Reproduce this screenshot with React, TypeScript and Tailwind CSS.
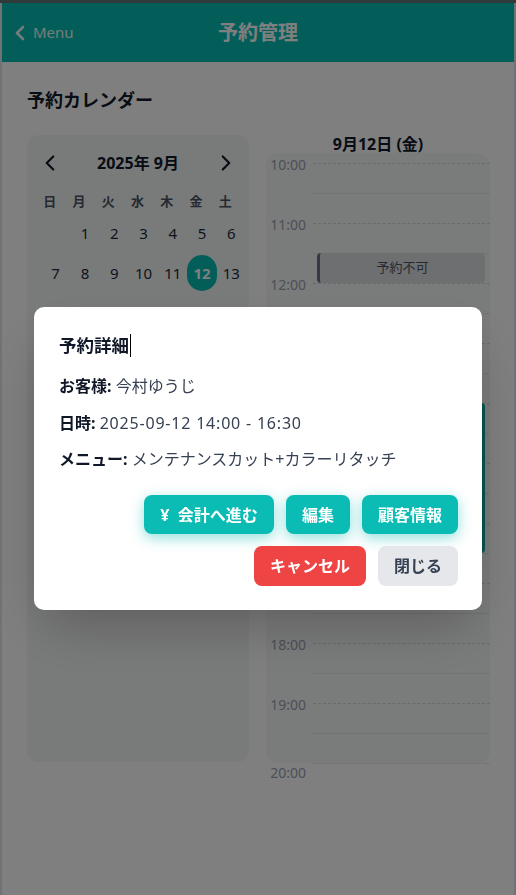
import { ChevronLeft, ChevronRight } from 'lucide-react'

const WEEKDAYS = ['日', '月', '火', '水', '木', '金', '土']
const HOURS = [10, 11, 12, 13, 14, 15, 16, 17, 18, 19]
const SELECTED = 12

// September 2025 starts on Monday
const CELLS: (number | null)[] = [null, ...Array.from({ length: 30 }, (_, i) => i + 1)]

function HourRow({ hour }: { hour: number }) {
  return (
    <div className="flex h-[60px]">
      <div className="w-[40px] shrink-0 -mt-[7px] text-right text-[14px] leading-[18px] text-gray-400">{hour}:00</div>
      <div className="ml-[7px] flex-1 flex flex-col">
        <div className="h-[30px] border-t border-dashed border-gray-300" />
        <div className="h-[30px] border-t border-dotted border-gray-300" />
      </div>
    </div>
  )
}

export default function App() {
  return (
    <div className="min-h-screen bg-[#dae9e6] font-['Noto_Sans','Noto_Sans_CJK_JP',sans-serif]">
      <div className="h-[3px] bg-[#5f7573]" />
      <div className="mx-[2px] bg-white min-h-[892px]">
        {/* Header */}
        <header className="h-[59px] bg-[#07bdb5] grid grid-cols-[1fr_auto_1fr] items-center">
          <div className="flex items-center pl-[6px] text-white/90">
            <ChevronLeft size={24} strokeWidth={2.6} />
            <span className="ml-[1px] text-[15px]">Menu</span>
          </div>
          <h1 className="text-[20px] font-bold text-white">予約管理</h1>
          <div />
        </header>

        <main className="pl-[25px] pr-[24px] pt-[26px]">
          <h2 className="text-[18px] leading-6 font-bold text-gray-900 mb-[23px]">予約カレンダー</h2>

          <div className="grid grid-cols-[222px_1fr] gap-[17px] items-start">
            {/* Calendar */}
            <div className="h-[627px] rounded-xl bg-[#f3f5f4] pt-[12px]">
              <div className="flex h-8 items-center justify-between px-[10px] text-gray-900">
                <ChevronLeft size={26} strokeWidth={2} />
                <span className="text-[16px] font-bold">2025年 9月</span>
                <ChevronRight size={26} strokeWidth={2} />
              </div>
              <div className="mt-[12px] ml-[8px] grid w-[205px] grid-cols-7">
                {WEEKDAYS.map((d) => (
                  <div key={d} className="h-5 text-center text-[13px] leading-5 font-semibold text-gray-600">
                    {d}
                  </div>
                ))}
              </div>
              <div className="mt-[2px] ml-[14px] grid w-[205px] grid-cols-7">
                {CELLS.map((d, i) => (
                  <div key={i} className="flex h-10 items-center justify-center">
                    {d === SELECTED ? (
                      <span className="flex h-9 w-9 items-center justify-center rounded-full bg-[#07bdb5] text-[15px] font-bold text-white">
                        {d}
                      </span>
                    ) : (
                      <span className="text-[15px] text-gray-800">{d ?? ''}</span>
                    )}
                  </div>
                ))}
              </div>
            </div>

            {/* Day timeline */}
            <div>
              <h3 className="text-center text-[16px] leading-[18px] font-bold text-gray-900">9月12日 (金)</h3>
              <div className="relative rounded-xl bg-[#f5f7f6] pt-[10px]">
                {HOURS.map((h) => (
                  <HourRow key={h} hour={h} />
                ))}
                <div className="absolute left-[51px] right-[5px] top-[100px] flex h-[30px] items-center justify-center rounded-sm border-l-[3px] border-gray-500 bg-[#dcdee3] text-[13px] text-gray-600">
                  予約不可
                </div>
                <div className="absolute left-[51px] right-[5px] top-[250px] h-[150px] rounded-sm border-l-[3px] border-[#0f8e87] bg-[#0fa8a0]" />
              </div>
              <div className="flex">
                <div className="w-[40px] shrink-0 mt-[1px] text-right text-[14px] leading-[18px] text-gray-400">20:00</div>
                <div className="ml-[7px] flex-1 border-t border-dotted border-gray-300" />
              </div>
            </div>
          </div>
        </main>
      </div>

      {/* Modal */}
      <div className="fixed inset-0 flex items-start justify-center bg-black/50 pt-[307px]">
        <div className="w-[448px] rounded-[10px] bg-white pt-[26px] pb-6 pl-[25px] pr-6 shadow-2xl">
          <h4 className="flex items-center text-[17.5px] leading-6 font-bold text-gray-900">
            予約詳細
            <span className="ml-[1px] inline-block h-[23px] w-px bg-black" />
          </h4>
          <div className="mt-[18px] flex flex-col gap-[14.5px] text-[16px] leading-[22px] text-gray-700">
            <p>
              <span className="font-bold text-gray-900">お客様:</span> 今村ゆうじ
            </p>
            <p>
              <span className="font-bold text-gray-900">日時:</span>{' '}
              <span className="tracking-[0.8px]">2025-09-12 14:00 - 16:30</span>
            </p>
            <p>
              <span className="font-bold text-gray-900">メニュー:</span> メンテナンスカット+カラーリタッチ
            </p>
          </div>
          <div className="mt-[25px] flex justify-end gap-3">
            <button className="h-[39px] w-[130px] rounded-lg bg-[#0bbcb4] text-[16px] font-bold text-white shadow-[0_4px_14px_rgba(11,188,180,0.45)]">
              ¥&nbsp;&nbsp;会計へ進む
            </button>
            <button className="h-[39px] w-[64px] rounded-lg bg-[#0bbcb4] text-[16px] font-bold text-white shadow-[0_4px_14px_rgba(11,188,180,0.45)]">
              編集
            </button>
            <button className="h-[39px] w-[96px] rounded-lg bg-[#0bbcb4] text-[16px] font-bold text-white shadow-[0_4px_14px_rgba(11,188,180,0.45)]">
              顧客情報
            </button>
          </div>
          <div className="mt-3 flex justify-end gap-3">
            <button className="h-10 w-[112px] rounded-lg bg-[#ef4444] text-[16px] font-bold text-white">キャンセル</button>
            <button className="h-10 w-[80px] rounded-lg bg-[#e5e7eb] text-[16px] font-bold text-gray-700">閉じる</button>
          </div>
        </div>
      </div>
    </div>
  )
}
